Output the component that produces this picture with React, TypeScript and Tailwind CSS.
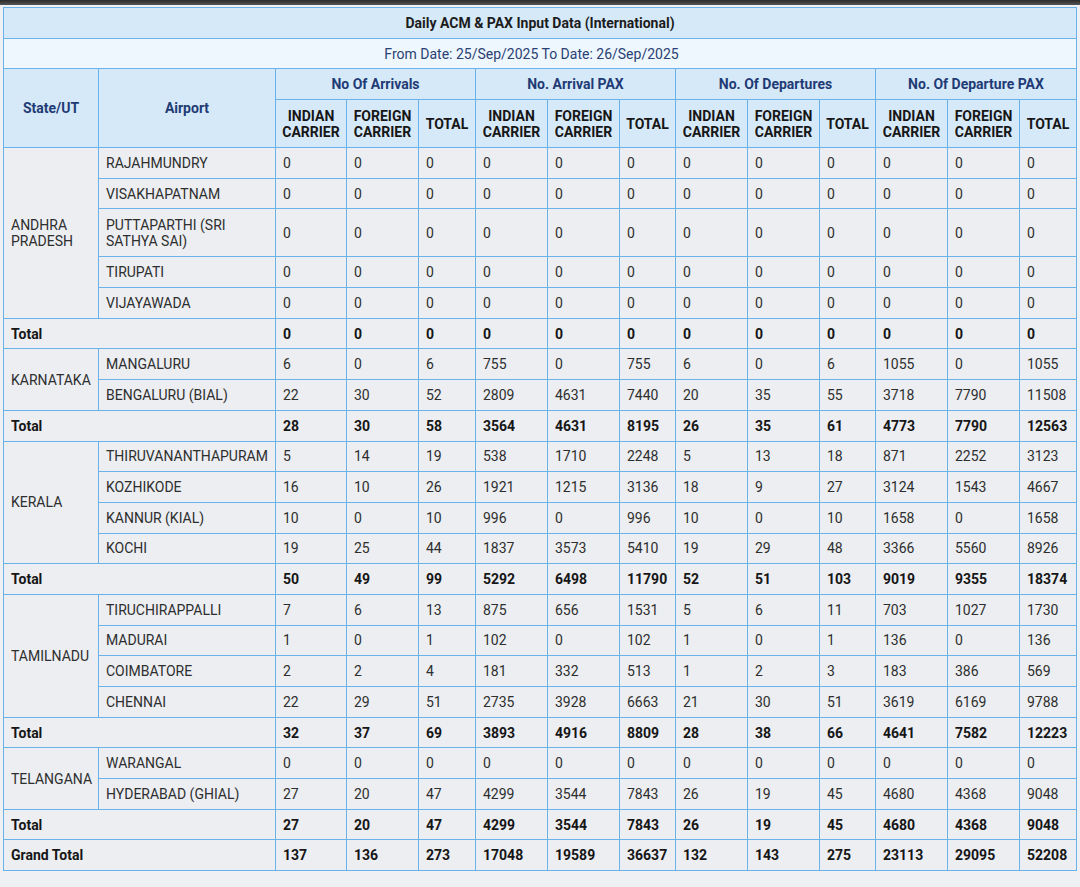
import React from "react";

type Row = { state?: string; span?: number; airport?: string; vals: number[]; total?: boolean; label?: string; tall?: boolean };

const rows: Row[] = [
  { state: "ANDHRA PRADESH", span: 5, airport: "RAJAHMUNDRY", vals: [0,0,0,0,0,0,0,0,0,0,0,0] },
  { airport: "VISAKHAPATNAM", vals: [0,0,0,0,0,0,0,0,0,0,0,0] },
  { airport: "PUTTAPARTHI (SRI SATHYA SAI)", vals: [0,0,0,0,0,0,0,0,0,0,0,0], tall: true },
  { airport: "TIRUPATI", vals: [0,0,0,0,0,0,0,0,0,0,0,0] },
  { airport: "VIJAYAWADA", vals: [0,0,0,0,0,0,0,0,0,0,0,0] },
  { total: true, label: "Total", vals: [0,0,0,0,0,0,0,0,0,0,0,0] },
  { state: "KARNATAKA", span: 2, airport: "MANGALURU", vals: [6,0,6,755,0,755,6,0,6,1055,0,1055] },
  { airport: "BENGALURU (BIAL)", vals: [22,30,52,2809,4631,7440,20,35,55,3718,7790,11508] },
  { total: true, label: "Total", vals: [28,30,58,3564,4631,8195,26,35,61,4773,7790,12563] },
  { state: "KERALA", span: 4, airport: "THIRUVANANTHAPURAM", vals: [5,14,19,538,1710,2248,5,13,18,871,2252,3123] },
  { airport: "KOZHIKODE", vals: [16,10,26,1921,1215,3136,18,9,27,3124,1543,4667] },
  { airport: "KANNUR (KIAL)", vals: [10,0,10,996,0,996,10,0,10,1658,0,1658] },
  { airport: "KOCHI", vals: [19,25,44,1837,3573,5410,19,29,48,3366,5560,8926] },
  { total: true, label: "Total", vals: [50,49,99,5292,6498,11790,52,51,103,9019,9355,18374] },
  { state: "TAMILNADU", span: 4, airport: "TIRUCHIRAPPALLI", vals: [7,6,13,875,656,1531,5,6,11,703,1027,1730] },
  { airport: "MADURAI", vals: [1,0,1,102,0,102,1,0,1,136,0,136] },
  { airport: "COIMBATORE", vals: [2,2,4,181,332,513,1,2,3,183,386,569] },
  { airport: "CHENNAI", vals: [22,29,51,2735,3928,6663,21,30,51,3619,6169,9788] },
  { total: true, label: "Total", vals: [32,37,69,3893,4916,8809,28,38,66,4641,7582,12223] },
  { state: "TELANGANA", span: 2, airport: "WARANGAL", vals: [0,0,0,0,0,0,0,0,0,0,0,0] },
  { airport: "HYDERABAD (GHIAL)", vals: [27,20,47,4299,3544,7843,26,19,45,4680,4368,9048] },
  { total: true, label: "Total", vals: [27,20,47,4299,3544,7843,26,19,45,4680,4368,9048] },
  { total: true, label: "Grand Total", vals: [137,136,273,17048,19589,36637,132,143,275,23113,29095,52208] },
];

const widths = [95, 177, 71, 72, 57, 72, 72, 56, 72, 72, 56, 72, 72, 57];
const groups = ["No Of Arrivals", "No. Arrival PAX", "No. Of Departures", "No. Of Departure PAX"];

const bd = "border border-[#6ab2ea]";

export default function App() {
  return (
    <div className="min-h-[887px] w-[1080px] bg-[#eef0f4] text-[14px]" style={{ fontFamily: "Roboto, 'Liberation Sans', sans-serif" }}>
      <div className="h-[5px] bg-gradient-to-b from-[#2a2a2a] to-[#555]" />
      <div className="pl-[3px] pt-[2px]">
        <table className="border-collapse table-fixed w-[1073px] leading-[16px]">
          <colgroup>
            {widths.map((w, i) => (
              <col key={i} style={{ width: w }} />
            ))}
          </colgroup>
          <thead>
            <tr className="h-[31px]">
              <th colSpan={14} className={`${bd} bg-[#d6e9f9] text-[#1c1c1c] font-bold text-center`}>
                Daily ACM &amp; PAX Input Data (International)
              </th>
            </tr>
            <tr className="h-[30px]">
              <th colSpan={14} className={`${bd} bg-[#eef6fe] text-[#2a4172] font-normal text-center pr-[17px]`}>
                From Date: 25/Sep/2025 To Date: 26/Sep/2025
              </th>
            </tr>
            <tr className="h-[31px]">
              <th rowSpan={2} className={`${bd} bg-[#d6e9f9] text-[#1f3b75] font-bold text-center`}>State/UT</th>
              <th rowSpan={2} className={`${bd} bg-[#d6e9f9] text-[#1f3b75] font-bold text-center`}>Airport</th>
              {groups.map((g) => (
                <th key={g} colSpan={3} className={`${bd} bg-[#d6e9f9] text-[#1f3b75] font-bold text-center`}>
                  {g}
                </th>
              ))}
            </tr>
            <tr className="h-[48px]">
              {groups.map((g) => (
                <React.Fragment key={g}>
                  <th className={`${bd} bg-[#d6e9f9] text-[#161616] font-bold text-center px-0`}>INDIAN<br />CARRIER</th>
                  <th className={`${bd} bg-[#d6e9f9] text-[#161616] font-bold text-center px-0`}>FOREIGN<br />CARRIER</th>
                  <th className={`${bd} bg-[#d6e9f9] text-[#161616] font-bold text-center px-0`}>TOTAL</th>
                </React.Fragment>
              ))}
            </tr>
          </thead>
          <tbody>
            {rows.map((r, i) => (
              <tr key={i} className={r.tall ? "h-[48px]" : "h-[30.7px]"}>
                {r.total ? (
                  <td colSpan={2} className={`${bd} bg-[#eceef2] pl-[7px] font-bold text-[#161616]`}>{r.label}</td>
                ) : (
                  <>
                    {r.state && (
                      <td rowSpan={r.span} className={`${bd} bg-[#eceef2] pl-[7px] pr-[4px] text-[#2e2e2e]`}>{r.state}</td>
                    )}
                    <td className={`${bd} bg-[#eceef2] pl-[7px] pr-[4px] text-[#2e2e2e] whitespace-normal`}>
                      {r.airport}
                    </td>
                  </>
                )}
                {r.vals.map((v, j) => (
                  <td key={j} className={`${bd} bg-[#eceef2] pl-[7px] ${r.total ? "font-bold text-[#161616]" : "text-[#2e2e2e]"}`}>
                    {v}
                  </td>
                ))}
              </tr>
            ))}
          </tbody>
        </table>
      </div>
    </div>
  );
}
